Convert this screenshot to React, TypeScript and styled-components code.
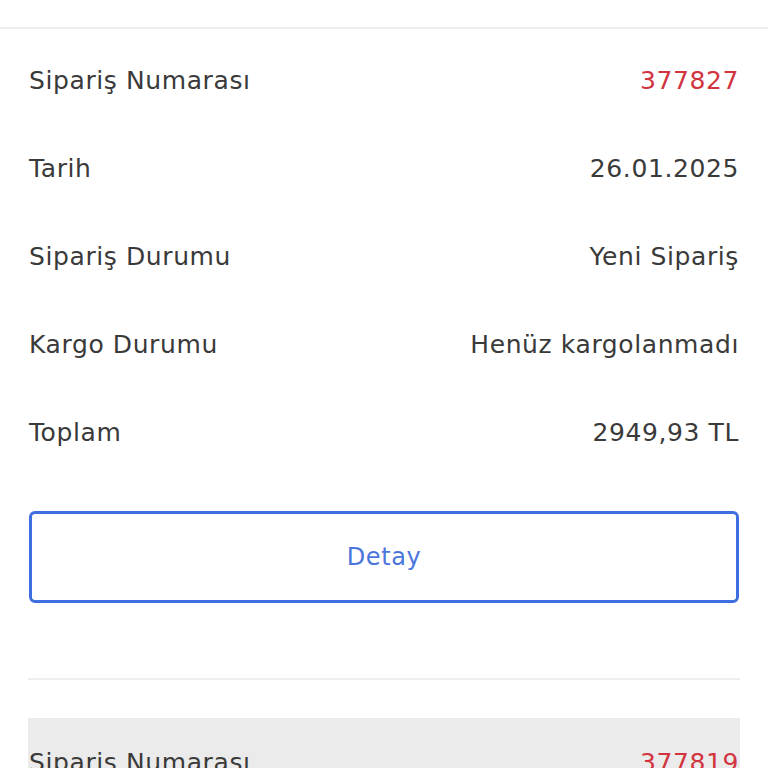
import React from "react";
import styled, { createGlobalStyle } from "styled-components";

const Global = createGlobalStyle`
  html, body { margin: 0; padding: 0; background: #ffffff; }
  body { font-family: "DejaVu Sans", "Noto Sans", sans-serif; overflow: hidden; }
`;

const Page = styled.div`
  display: flex;
  flex-direction: column;
  width: 768px;
`;

const TopBar = styled.div`
  height: 27px;
  border-bottom: 2px solid #eeeeee;
`;

const Card = styled.section<{ $shaded?: boolean }>`
  display: flex;
  flex-direction: column;
  margin: 0 28px;
  padding: ${(p) => (p.$shaded ? "0 1px" : "7px 1px 0")};
  background: ${(p) => (p.$shaded ? "#ebebeb" : "transparent")};
`;

const Row = styled.div`
  display: flex;
  align-items: center;
  justify-content: space-between;
  height: 88px;
  font-size: 25px;
  color: #3a3a3a;
  letter-spacing: 0.6px;
`;

const Value = styled.span<{ $accent?: boolean }>`
  color: ${(p) => (p.$accent ? "#d1343f" : "#3a3a3a")};
`;

const DetailButton = styled.button`
  margin: 35px 0 0;
  height: 92px;
  border: 3px solid #3f6ee0;
  border-radius: 6px;
  background: #ffffff;
  color: #4a76dc;
  font-family: "DejaVu Sans", "Noto Sans", sans-serif;
  font-size: 24px;
  letter-spacing: 0.6px;
  cursor: pointer;
`;

const Divider = styled.hr`
  margin: 75px 28px 38px;
  border: none;
  border-top: 2px solid #eeeeee;
`;

const rows = [
  { label: "Sipariş Numarası", value: "377827", accent: true },
  { label: "Tarih", value: "26.01.2025" },
  { label: "Sipariş Durumu", value: "Yeni Sipariş" },
  { label: "Kargo Durumu", value: "Henüz kargolanmadı" },
  { label: "Toplam", value: "2949,93 TL" },
];

export default function App() {
  return (
    <Page>
      <Global />
      <TopBar />
      <Card>
        {rows.map((r) => (
          <Row key={r.label}>
            <span>{r.label}</span>
            <Value $accent={r.accent}>{r.value}</Value>
          </Row>
        ))}
        <DetailButton>Detay</DetailButton>
      </Card>
      <Divider />
      <Card $shaded>
        <Row>
          <span>Sipariş Numarası</span>
          <Value $accent>377819</Value>
        </Row>
      </Card>
    </Page>
  );
}
